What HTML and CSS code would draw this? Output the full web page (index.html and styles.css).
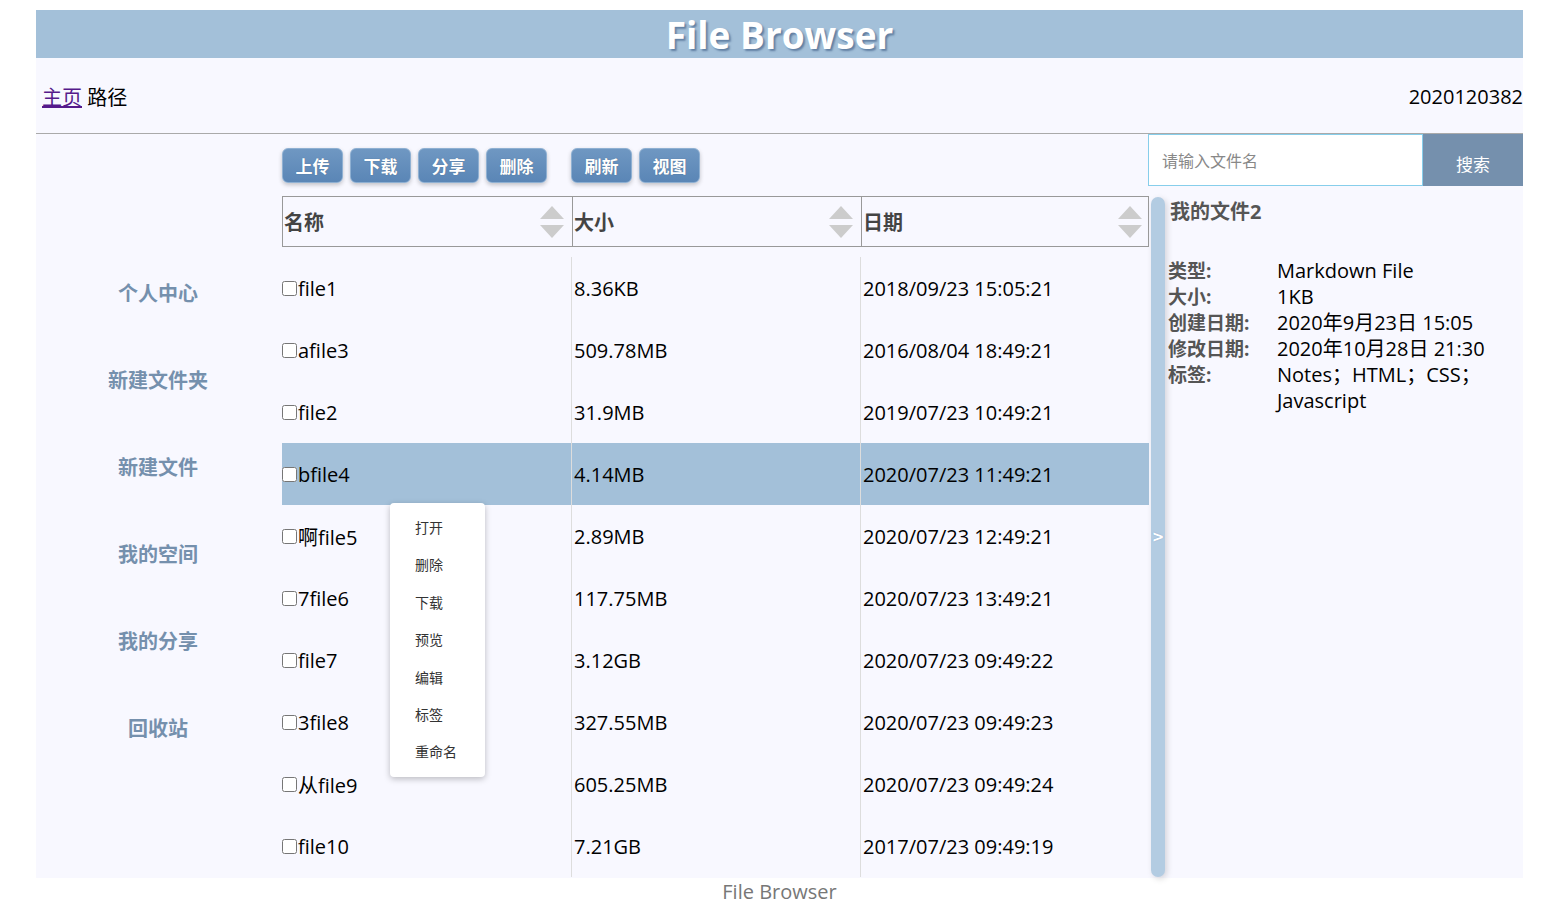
FILE: index.html
```html
<!DOCTYPE html>
<html lang="zh-CN">
<head>
<meta charset="utf-8">
<title>File Browser</title>
<link rel="stylesheet" href="styles.css">
</head>
<body>
<div class="app">
  <header class="topbar"><h1 class="title">File Browser</h1></header>
  <div class="crumbs">
    <div class="path"><a href="#" class="home">主页</a> 路径</div>
    <div class="user">2020120382</div>
  </div>
  <main class="main">
    <nav class="side">
      <ul class="side-list">
        <li>个人中心</li>
        <li>新建文件夹</li>
        <li>新建文件</li>
        <li>我的空间</li>
        <li>我的分享</li>
        <li>回收站</li>
      </ul>
    </nav>
    <section class="center">
      <div class="toolbar">
        <button class="btn">上传</button>
        <button class="btn">下载</button>
        <button class="btn">分享</button>
        <button class="btn">删除</button>
        <button class="btn btn-gap">刷新</button>
        <button class="btn">视图</button>
      </div>
      <div class="thead">
        <div class="th"><span>名称</span><span class="sort"><i class="up"></i><i class="down"></i></span></div>
        <div class="th"><span>大小</span><span class="sort"><i class="up"></i><i class="down"></i></span></div>
        <div class="th"><span>日期</span><span class="sort"><i class="up"></i><i class="down"></i></span></div>
      </div>
      <div class="tbody">
        <div class="row"><div class="td"><input type="checkbox" class="chk">file1</div><div class="td">8.36KB</div><div class="td">2018/09/23 15:05:21</div></div>
        <div class="row"><div class="td"><input type="checkbox" class="chk">afile3</div><div class="td">509.78MB</div><div class="td">2016/08/04 18:49:21</div></div>
        <div class="row"><div class="td"><input type="checkbox" class="chk">file2</div><div class="td">31.9MB</div><div class="td">2019/07/23 10:49:21</div></div>
        <div class="row selected"><div class="td"><input type="checkbox" class="chk">bfile4</div><div class="td">4.14MB</div><div class="td">2020/07/23 11:49:21</div></div>
        <div class="row"><div class="td"><input type="checkbox" class="chk">啊file5</div><div class="td">2.89MB</div><div class="td">2020/07/23 12:49:21</div></div>
        <div class="row"><div class="td"><input type="checkbox" class="chk">7file6</div><div class="td">117.75MB</div><div class="td">2020/07/23 13:49:21</div></div>
        <div class="row"><div class="td"><input type="checkbox" class="chk">file7</div><div class="td">3.12GB</div><div class="td">2020/07/23 09:49:22</div></div>
        <div class="row"><div class="td"><input type="checkbox" class="chk">3file8</div><div class="td">327.55MB</div><div class="td">2020/07/23 09:49:23</div></div>
        <div class="row"><div class="td"><input type="checkbox" class="chk">从file9</div><div class="td">605.25MB</div><div class="td">2020/07/23 09:49:24</div></div>
        <div class="row"><div class="td"><input type="checkbox" class="chk">file10</div><div class="td">7.21GB</div><div class="td">2017/07/23 09:49:19</div></div>
      </div>
      <ul class="ctx">
        <li>打开</li>
        <li>删除</li>
        <li>下载</li>
        <li>预览</li>
        <li>编辑</li>
        <li>标签</li>
        <li>重命名</li>
      </ul>
    </section>
    <aside class="right">
      <form class="search">
        <input class="search-input" type="text" placeholder="请输入文件名">
        <button class="search-btn" type="button">搜索</button>
      </form>
      <div class="detail-wrap">
        <div class="toggle">&gt;</div>
        <div class="detail">
          <h2 class="detail-title">我的文件2</h2>
          <dl class="info">
            <dt>类型:</dt><dd>Markdown File</dd>
            <dt>大小:</dt><dd>1KB</dd>
            <dt>创建日期:</dt><dd>2020年9月23日 15:05</dd>
            <dt>修改日期:</dt><dd>2020年10月28日 21:30</dd>
            <dt>标签:</dt><dd>Notes；HTML；CSS；<br>Javascript</dd>
          </dl>
        </div>
      </div>
    </aside>
  </main>
  <footer class="foot">File Browser</footer>
</div>
</body>
</html>
```

FILE: styles.css
```css
* { box-sizing: border-box; }
html, body { margin: 0; padding: 0; background: #fff; }
body {
  font-family: "Open Sans", "Noto Sans CJK SC", sans-serif;
  color: #000;
}
.app {
  width: 1487px;
  margin: 10px 0 0 36px;
}
.topbar {
  height: 48px;
  background: #a3c0d9;
}
.title {
  margin: 0;
  text-align: center;
  color: #fff;
  font-size: 37px;
  font-weight: 700;
  line-height: 50px;
  text-shadow: 2px 2px 2px rgba(70, 100, 140, 0.7);
}
.crumbs {
  height: 76px;
  background: #f8f8ff;
  border-bottom: 1px solid #aaa;
  display: flex;
  justify-content: space-between;
  align-items: center;
  font-size: 20px;
  padding: 2px 0 0 6px;
}
.home { color: #551a8b; text-decoration: underline; }
.main {
  display: flex;
  background: #f8f8ff;
  height: 744px;
  position: relative;
}
.side { width: 246px; flex: none; }
.side-list {
  list-style: none;
  margin: 0;
  padding: 115px 0 0;
}
.side-list li {
  height: 87px;
  display: flex;
  align-items: center;
  justify-content: center;
  font-size: 20px;
  font-weight: 700;
  color: #7590ad;
  padding-right: 2px;
}
.center {
  width: 867px;
  flex: none;
  position: relative;
}
.toolbar {
  display: flex;
  gap: 7px;
  padding-top: 14px;
  height: 62px;
}
.btn {
  width: 61px;
  height: 35px;
  border: 1px solid #8fb0d2;
  border-radius: 6px;
  background: linear-gradient(#6f97c2, #5a86b6);
  color: #fff;
  font-family: "Noto Sans CJK SC", sans-serif;
  font-size: 17px;
  font-weight: 700;
  padding: 0;
  box-shadow: 0 2px 4px rgba(0, 0, 0, 0.22);
  text-shadow: 0 0 1px rgba(0,0,0,0.3);
}
.btn-gap { margin-left: 17px; }
.thead {
  display: grid;
  grid-template-columns: 289px 289px 289px;
  border: 1px solid #999;
  height: 51px;
}
.th {
  display: flex;
  align-items: center;
  justify-content: space-between;
  padding: 0 8px 0 1px;
  font-size: 20px;
  font-weight: 700;
  color: #444;
}
.th + .th { border-left: 1px solid #999; }
.sort {
  display: flex;
  flex-direction: column;
  gap: 6px;
  padding-top: 1px;
}
.sort i {
  display: block;
  width: 0;
  height: 0;
  border-left: 12.5px solid transparent;
  border-right: 12.5px solid transparent;
}
.sort .up { border-bottom: 13px solid #ccc; }
.sort .down { border-top: 13px solid #ccc; }
.tbody { margin-top: 10px; }
.row {
  display: grid;
  grid-template-columns: 289px 289px 289px;
  height: 62px;
}
.row.selected { background: #a3c0d9; }
.td {
  display: flex;
  align-items: center;
  font-size: 20px;
  padding-left: 2px;
}
.td:first-child { padding-left: 0; }
.td + .td { border-left: 1px solid #ddd; }
.chk {
  width: 15px;
  height: 15px;
  margin: 0 1px 0 0;
}
.ctx {
  position: absolute;
  left: 108px;
  top: 369px;
  width: 95px;
  margin: 0;
  padding: 6px 0;
  list-style: none;
  background: #fff;
  border-radius: 4px;
  box-shadow: 0 2px 6px rgba(0, 0, 0, 0.25);
  font-family: "Noto Sans CJK SC", sans-serif;
}
.ctx li {
  height: 37.4px;
  line-height: 37px;
  padding-left: 25px;
  font-size: 14px;
  color: #333;
}
.right {
  width: 375px;
  flex: none;
  margin-left: -1px;
}
.search {
  display: flex;
  height: 52px;
  margin: 0;
}
.search-input {
  width: 275px;
  height: 52px;
  border: 1px solid #87ceeb;
  background: #fff;
  padding: 0 13px;
  font-family: "Noto Sans CJK SC", sans-serif;
  font-size: 16px;
  outline: none;
}
.search-input::placeholder { color: #888; }
.search-btn {
  width: 100px;
  height: 52px;
  border: none;
  background: #7590ad;
  color: #fff;
  font-family: "Noto Sans CJK SC", sans-serif;
  font-size: 17px;
  padding: 6px 0 0;
}
.detail-wrap {
  display: flex;
  margin-top: 11px;
}
.toggle {
  width: 14px;
  height: 680px;
  margin-left: 3px;
  border-radius: 7px;
  background: #b3cce2;
  box-shadow: 2px 2px 6px rgba(0, 0, 0, 0.15);
  color: #fff;
  font-family: "DejaVu Sans", sans-serif;
  font-size: 15px;
  font-weight: 700;
  text-shadow: 0 0 1px rgba(60, 110, 170, 0.6);
  display: flex;
  align-items: center;
  justify-content: center;
}
.detail {
  padding-left: 3px;
  flex: 1;
}
.detail-title {
  margin: 0;
  font-size: 20px;
  font-weight: 700;
  color: #555;
  line-height: 30px;
  padding-left: 2px;
}
.info {
  display: grid;
  grid-template-columns: 109px 1fr;
  margin: 31px 0 0;
  font-size: 20px;
  line-height: 26px;
}
.info dt { font-weight: 700; color: #555; font-size: 19px; }
.info dd { margin: 0; color: #000; }
.foot {
  text-align: center;
  color: #777;
  font-size: 20px;
  line-height: 28px;
}
```
